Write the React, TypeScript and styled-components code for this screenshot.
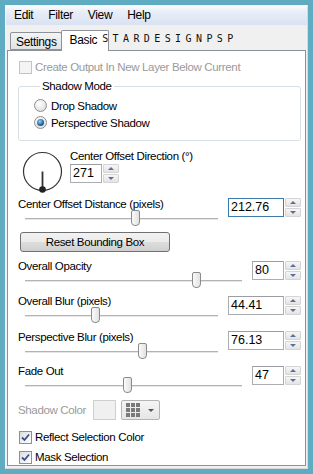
import React from "react";
import styled, { createGlobalStyle } from "styled-components";

const GlobalStyle = createGlobalStyle`
  html, body {
    margin: 0;
    padding: 0;
    background: #5eabc2;
  }
  body {
    font-family: "Liberation Sans", Arial, sans-serif;
    font-size: 11.5px;
    letter-spacing: -0.35px;
    color: #000;
  }
`;

const Page = styled.div`
  width: 313px;
  height: 474px;
  padding: 5px;
  box-sizing: border-box;
  background: #5eabc2;
`;

const Window = styled.div`
  width: 303px;
  height: 464px;
  box-sizing: border-box;
  background: #f0f0f0;
  border: 1px solid #f7f7f7;
  border-right-color: #d8d8d8;
  border-bottom-color: #d8d8d8;
  display: flex;
  flex-direction: column;
`;

const MenuBar = styled.div`
  height: 19px;
  display: flex;
  align-items: center;
  padding-left: 1px;
  background: linear-gradient(#fbfcfe 0%, #eaeff8 25%, #d9e2f2 100%);
`;

const MenuItem = styled.span`
  padding: 0 7px 0 7px;
  margin-right: 1px;
  font-size: 12px;
  line-height: 19px;
`;

const TabStrip = styled.div`
  height: 25px;
  display: flex;
  align-items: flex-end;
  padding-left: 4px;
  position: relative;
  z-index: 1;
`;

const Tab = styled.div<{ $active?: boolean }>`
  box-sizing: border-box;
  height: ${(p) => (p.$active ? "21px" : "18px")};
  margin-bottom: ${(p) => (p.$active ? "-1px" : "0")};
  padding: ${(p) => (p.$active ? "2px 11px 0 8px" : "2px 4px 0 5px")};
  border: 1px solid #8d9199;
  border-bottom: ${(p) => (p.$active ? "none" : "1px solid #8d9199")};
  border-radius: 2px 2px 0 0;
  background: ${(p) =>
    p.$active ? "#ffffff" : "linear-gradient(#f4f4f4, #e2e2e2)"};
  margin-left: ${(p) => (p.$active ? "-1px" : "0")};
  font-size: 12px;
  line-height: 14px;
`;

const Watermark = styled.span`
  align-self: center;
  margin: 2px 0 0 -7px;
  font-family: "DejaVu Sans Mono", monospace;
  font-size: 10px;
  letter-spacing: 4.4px;
  color: #111;
`;

const Panel = styled.div`
  flex: 1;
  margin: 0 1px 2px 1px;
  background: #ffffff;
  border: 1px solid #8d9199;
  padding: 0 4px 0 10px;
  display: flex;
  flex-direction: column;
`;

const CheckRow = styled.label<{ $disabled?: boolean; $mt: number }>`
  display: flex;
  align-items: center;
  height: 16px;
  margin-top: ${(p) => p.$mt}px;
  padding-left: 1px;
  gap: 3px;
  color: ${(p) => (p.$disabled ? "#9a9a9a" : "#000")};
`;

const CheckBox = styled.span<{ $disabled?: boolean }>`
  width: 13px;
  height: 13px;
  box-sizing: border-box;
  border: 1px solid ${(p) => (p.$disabled ? "#c4c4c4" : "#8e8f8f")};
  background: ${(p) =>
    p.$disabled ? "#f4f4f4" : "linear-gradient(135deg, #dcdcdc, #ffffff)"};
  display: flex;
  align-items: center;
  justify-content: center;
`;

const GroupBox = styled.fieldset`
  margin: 4px 0 0 0;
  padding: 4px 10px 9px 15px;
  border: 1px solid #d5dfe5;
  border-radius: 3px;
  min-width: 0;
`;

const Legend = styled.legend`
  padding: 0 2px;
  margin-left: 6px;
  line-height: 14px;
`;

const RadioRow = styled.div`
  display: flex;
  align-items: center;
  height: 17px;
  gap: 4px;
`;

const Radio = styled.span<{ $checked?: boolean }>`
  width: 13px;
  height: 13px;
  box-sizing: border-box;
  border-radius: 50%;
  border: 1px solid #8e8f8f;
  background: radial-gradient(circle at 40% 35%, #ffffff, #d6d6d6);
  display: flex;
  align-items: center;
  justify-content: center;
  &::after {
    content: "";
    display: ${(p) => (p.$checked ? "block" : "none")};
    width: 7px;
    height: 7px;
    border-radius: 50%;
    background: radial-gradient(circle at 40% 35%, #8fd3f7, #1c5f9e 60%, #0e3b70);
  }
`;

const DialRow = styled.div`
  display: flex;
  margin-top: 8px;
  height: 42px;
`;

const DialBox = styled.div`
  width: 42px;
  margin: 2px 6px 0 4px;
`;

const DialColumn = styled.div`
  display: flex;
  flex-direction: column;
  gap: 1px;
`;

const Label = styled.div<{ $disabled?: boolean }>`
  line-height: 14px;
  color: ${(p) => (p.$disabled ? "#9a9a9a" : "#000")};
`;

const SpinWrap = styled.div<{ $mt?: number }>`
  display: flex;
  gap: 1px;
  margin-top: ${(p) => p.$mt ?? 0}px;
  align-self: flex-start;
`;

const SpinInput = styled.div<{ $w: number; $focus?: boolean }>`
  width: ${(p) => p.$w}px;
  height: 19px;
  box-sizing: border-box;
  border: 1px solid ${(p) => (p.$focus ? "#3d7bad" : "#abadb3")};
  border-top-color: ${(p) => (p.$focus ? "#3d7bad" : "#9a9da4")};
  padding-left: 2px;
  font-size: 12.5px;
  letter-spacing: 0;
  line-height: 17px;
  background: #fff;
`;

const SpinButtons = styled.div`
  display: flex;
  flex-direction: column;
  gap: 1px;
  width: 16px;
`;

const SpinButton = styled.div<{ $down?: boolean }>`
  height: 9px;
  box-sizing: border-box;
  border: 1px solid #d4d4d4;
  border-radius: 1px;
  background: linear-gradient(#f6f6f6, #e4e4e4);
  display: flex;
  align-items: center;
  justify-content: center;
  &::after {
    content: "";
    width: 0;
    height: 0;
    border-left: 3px solid transparent;
    border-right: 3px solid transparent;
    ${(p) =>
      p.$down
        ? "border-top: 3px solid #5b6f9e;"
        : "border-bottom: 3px solid #5b6f9e;"}
  }
`;

const SliderRow = styled.div<{ $mt: number }>`
  display: flex;
  margin-top: ${(p) => p.$mt}px;
  height: 30px;
`;

const SliderLeft = styled.div`
  flex: 1;
  display: flex;
  flex-direction: column;
  padding-right: 10px;
`;

const Track = styled.div`
  position: relative;
  margin: 7px 0 0 7px;
  height: 1px;
  border-top: 1px solid #b3b3b3;
  border-bottom: 1px solid #ffffff;
  background: #e6e6e6;
`;

const Thumb = styled.div`
  position: absolute;
  top: -9px;
  width: 9px;
  height: 16px;
  margin-left: -4px;
  box-sizing: border-box;
  border: 1px solid #8a8a8a;
  border-radius: 2px 2px 4px 4px;
  background: linear-gradient(90deg, #fafafa, #e2e2e2);
`;

const PushButton = styled.div`
  margin: 5px 0 0 2px;
  width: 150px;
  height: 20px;
  box-sizing: border-box;
  border: 1px solid #707070;
  border-radius: 3px;
  background: linear-gradient(#f2f2f2 0%, #ebebeb 50%, #dddddd 51%, #cfcfcf 100%);
  text-align: center;
  line-height: 18px;
`;

const ColorRow = styled.div`
  display: flex;
  align-items: center;
  height: 20px;
  margin-top: 6px;
`;

const Swatch = styled.div`
  width: 23px;
  height: 20px;
  box-sizing: border-box;
  border: 1px solid #cfcfcf;
  background: #f0f0f0;
  margin-left: 7px;
`;

const DropButton = styled.div`
  width: 39px;
  height: 20px;
  box-sizing: border-box;
  margin-left: 5px;
  border: 1px solid #b5b5b5;
  border-radius: 2px;
  background: linear-gradient(#f5f5f5, #e6e6e6);
  display: flex;
  align-items: center;
  padding-left: 4px;
  gap: 8px;
`;

const GridIcon = styled.div`
  display: grid;
  grid-template-columns: repeat(3, 4px);
  grid-template-rows: repeat(3, 4px);
  gap: 1px;
  span {
    background: #7a7a7a;
  }
`;

const Arrow = styled.div`
  width: 0;
  height: 0;
  border-left: 3px solid transparent;
  border-right: 3px solid transparent;
  border-top: 3px solid #555;
`;

function Check({ checked, disabled }: { checked?: boolean; disabled?: boolean }) {
  return (
    <CheckBox $disabled={disabled}>
      {checked && (
        <svg width="9" height="9" viewBox="0 0 9 9">
          <path d="M1 4.5 L3.5 7 L8 1.5" stroke="#3b4f8c" strokeWidth="1.8" fill="none" />
        </svg>
      )}
    </CheckBox>
  );
}

function Spin({ value, w, focus, mt }: { value: string; w: number; focus?: boolean; mt?: number }) {
  return (
    <SpinWrap $mt={mt}>
      <SpinInput $w={w} $focus={focus}>
        {value}
      </SpinInput>
      <SpinButtons>
        <SpinButton />
        <SpinButton $down />
      </SpinButtons>
    </SpinWrap>
  );
}

function Slider({
  label,
  pos,
  value,
  w,
  focus,
  mt,
  spinMt,
}: {
  label: string;
  pos: number;
  value: string;
  w: number;
  focus?: boolean;
  mt: number;
  spinMt?: number;
}) {
  return (
    <SliderRow $mt={mt}>
      <SliderLeft>
        <Label>{label}</Label>
        <Track>
          <Thumb style={{ left: `${pos * 100}%` }} />
        </Track>
      </SliderLeft>
      <Spin value={value} w={w} focus={focus} mt={spinMt} />
    </SliderRow>
  );
}

export default function App() {
  return (
    <Page>
      <GlobalStyle />
      <Window>
        <MenuBar>
          <MenuItem>Edit</MenuItem>
          <MenuItem>Filter</MenuItem>
          <MenuItem>View</MenuItem>
          <MenuItem>Help</MenuItem>
        </MenuBar>
        <TabStrip>
          <Tab>Settings</Tab>
          <Tab $active>Basic</Tab>
          <Watermark>STARDESIGNPSP</Watermark>
        </TabStrip>
        <Panel>
          <CheckRow $disabled $mt={8}>
            <Check disabled />
            Create Output In New Layer Below Current
          </CheckRow>

          <GroupBox>
            <Legend>Shadow Mode</Legend>
            <RadioRow>
              <Radio />
              Drop Shadow
            </RadioRow>
            <RadioRow>
              <Radio $checked />
              Perspective Shadow
            </RadioRow>
          </GroupBox>

          <DialRow>
            <DialBox>
              <svg width="42" height="42" viewBox="0 0 42 42">
                <circle cx="20.5" cy="20.5" r="19" fill="none" stroke="#333" strokeWidth="1.2" />
                <line x1="20.5" y1="20.5" x2="20.5" y2="38" stroke="#333" strokeWidth="1.8" />
                <circle cx="20.5" cy="38.5" r="3.3" fill="#222" />
              </svg>
            </DialBox>
            <DialColumn>
              <Label>Center Offset Direction (°)</Label>
              <Spin value="271" w={32} />
            </DialColumn>
          </DialRow>

          <Slider label="Center Offset Distance (pixels)" pos={0.57} value="212.76" w={56} focus mt={6} spinMt={1} />

          <PushButton>Reset Bounding Box</PushButton>

          <Slider label="Overall Opacity" pos={0.79} value="80" w={32} mt={7} spinMt={2} />
          <Slider label="Overall Blur (pixels)" pos={0.363} value="44.41" w={56} mt={5} spinMt={2} />
          <Slider label="Perspective Blur (pixels)" pos={0.606} value="76.13" w={56} mt={6} spinMt={1} />
          <Slider label="Fade Out" pos={0.47} value="47" w={32} mt={4} spinMt={2} />

          <ColorRow>
            <Label $disabled>Shadow Color</Label>
            <Swatch />
            <DropButton>
              <GridIcon>
                {Array.from({ length: 9 }).map((_, i) => (
                  <span key={i} />
                ))}
              </GridIcon>
              <Arrow />
            </DropButton>
          </ColorRow>

          <CheckRow $mt={9}>
            <Check checked />
            Reflect Selection Color
          </CheckRow>
          <CheckRow $mt={4}>
            <Check checked />
            Mask Selection
          </CheckRow>
        </Panel>
      </Window>
    </Page>
  );
}
